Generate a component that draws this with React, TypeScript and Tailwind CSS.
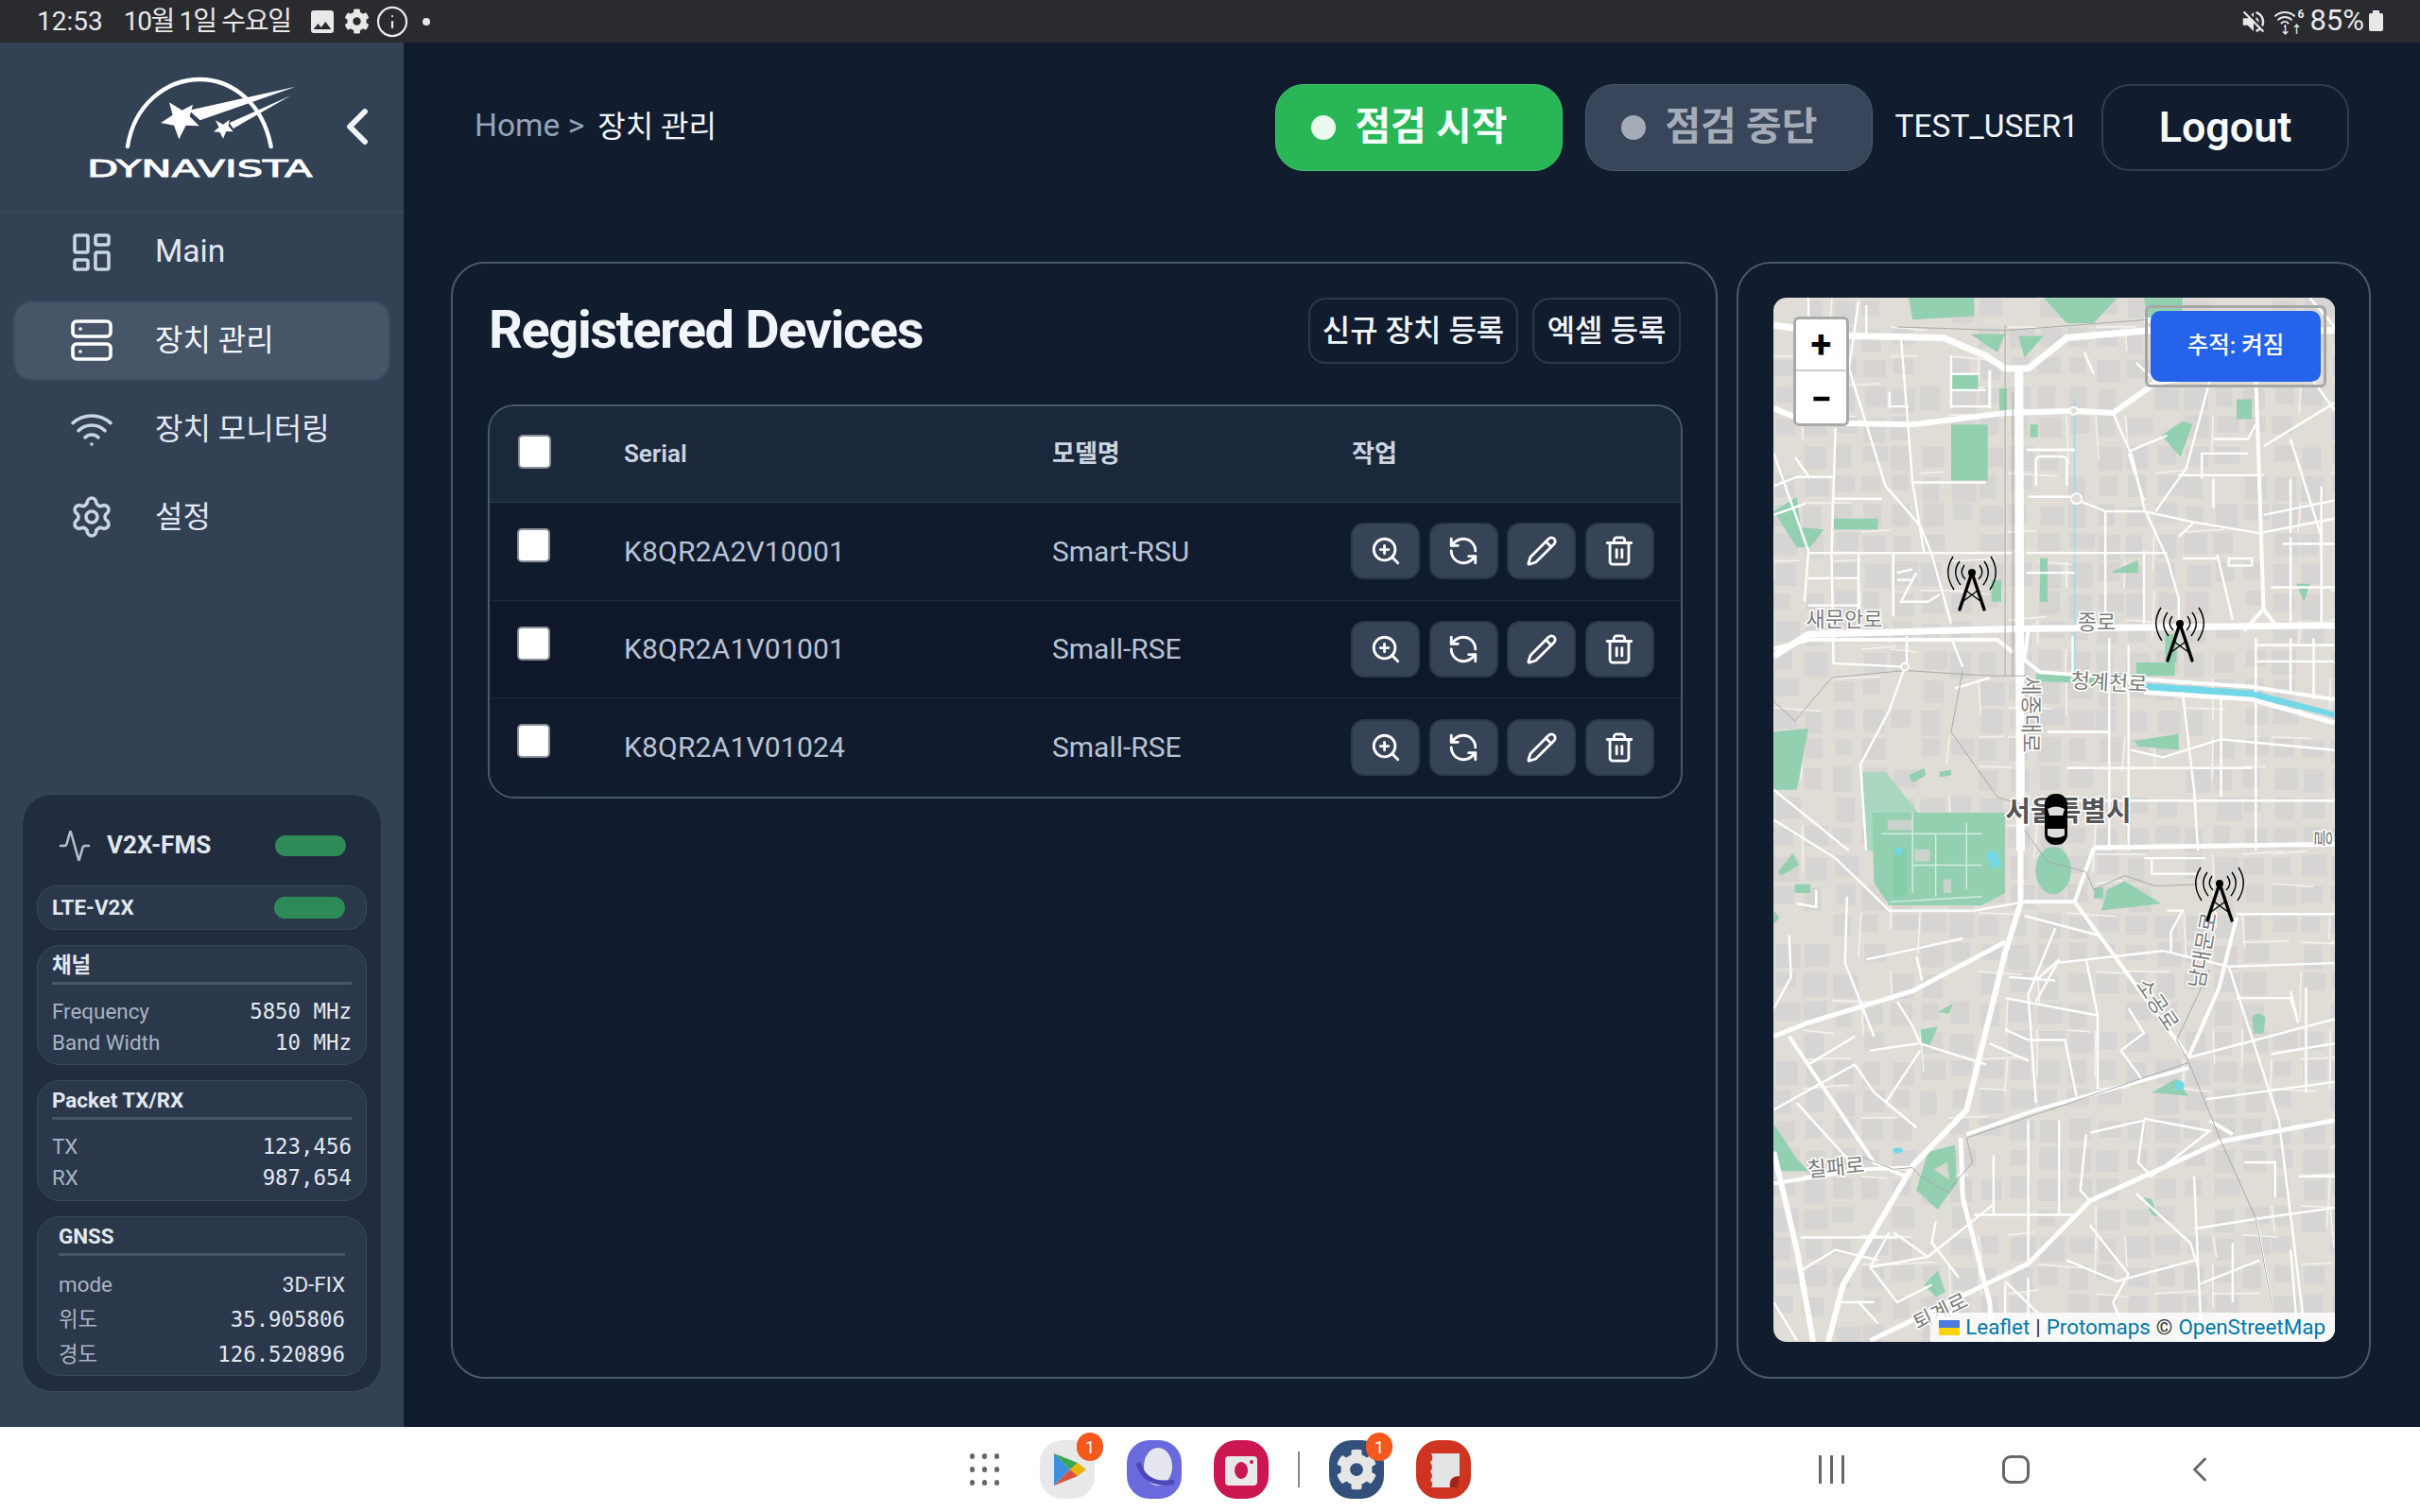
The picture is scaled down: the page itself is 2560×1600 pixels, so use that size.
import {
  Activity,
  ChevronLeft,
  Info,
  LayoutDashboard,
  Pencil,
  RefreshCcw,
  Server,
  Settings,
  Trash2,
  Wifi,
  ZoomIn,
} from "lucide-react"
import { FaCog } from "react-icons/fa"
import { MdImage, MdVolumeOff } from "react-icons/md"

const FONT = "font-['Roboto','Noto_Sans_CJK_KR',sans-serif]"

// map roads, in the coordinates of the two map crops
const topMajor: [number, string][] = [
  [7, "M40 115 L240 145 L480 150 L590 200 L640 235 H700 L800 150 L1010 130 H1494"],
  [9, "M676 235 L680 1568"],
  [6, "M40 345 L130 385 L400 390 L640 358 L820 352 L920 358 L1030 275 L1170 250"],
  [7, "M40 1030 L130 970 L660 955 L1494 945"],
  [4, "M40 1010 L130 985 L620 985 L660 1020"],
  [4, "M700 960 L690 1040 L730 1075 L1280 1115 L1494 1150"],
  [5, "M1000 1130 L1280 1150 L1494 1215"],
  [4, "M1290 250 L1310 900 L1260 960"],
  [4, "M1310 900 L1345 950"],
  [3, "M600 240 L600 345"],
  [6, "M1000 100 L1090 110 L1330 110"],
]
const topMinor = [
  "M200 400 L190 745 L195 1050 L380 1060",
  "M370 150 L400 550 L430 745",
  "M235 235 L330 560 L420 670 L450 750 L500 940",
  "M400 550 H590",
  "M190 595 H320",
  "M130 745 H660",
  "M260 745 V950",
  "M350 745 V920",
  "M40 470 L130 740 L120 880",
  "M40 560 L100 535 H200",
  "M500 980 L530 1060",
  "M385 975 V1060",
  "M700 590 H810 L830 600 L900 630 H1000 L1130 660 L1300 690 L1494 650",
  "M920 358 L970 480 L1000 620 L1060 760 L1090 870 L1090 940",
  "M900 630 V940",
  "M815 975 V1090",
  "M695 745 H1060",
  "M960 465 L1060 420",
  "M1030 630 L1110 510 L1170 270",
  "M1090 530 H1310",
  "M1310 450 L1494 330",
  "M1310 640 L1494 600",
  "M1150 540 V470 L1270 470",
  "M1460 560 V940",
  "M1380 430 L1460 700",
  "M1190 750 L1230 930",
  "M960 1000 V1110",
  "M910 980 V1568",
  "M960 1130 V1568",
  "M1100 1130 L1130 1400 L1140 1568",
  "M1200 1140 V1420",
  "M1290 980 V1130",
  "M1290 1160 V1568",
  "M965 1290 L1050 1310 L1200 1260 L1494 1290",
  "M750 1240 H910",
  "M800 1340 H1280",
  "M790 1430 H1494",
  "M1290 1000 H1494",
  "M1290 1045 H1494",
  "M1380 980 V1130",
  "M1440 980 V1150",
  "M380 1060 L340 1180 L265 1330 L280 1568",
  "M720 560 V490 Q720 478 735 478 H785 Q800 478 800 490 V560",
  "M695 460 H820",
  "M235 1568 L40 1400",
  "M510 1120 L600 1090",
  "M340 300 V340 H390",
  "M500 200 V340 H600",
  "M500 250 H570 M500 295 H590",
  "M95 480 L135 540 M40 640 L120 610",
  "M260 50 L235 235",
  "M130 40 V120 M280 60 V140",
  "M1430 40 L1494 120 M1330 110 L1494 350",
  "M845 190 L870 250 M980 220 L1040 280",
  "M960 470 L1000 600",
  "M1180 430 L1270 430 L1290 390",
  "M1180 620 V540 M1380 540 V690",
  "M1090 700 L1130 660",
  "M1220 760 H1280 V780 H1220 Z",
  "M1380 700 V940 M1360 720 H1494 M1330 840 H1494",
  "M410 800 L370 880 L440 880 L470 860",
  "M400 790 L360 800 M360 820 H400",
  "M130 815 H260 M130 890 H260",
  "M820 460 H700 M820 800 H695",
  "M1000 740 L1000 940 M1100 760 H1190",
]
const topBoundary = [
  "M40 1155 L95 1210 L190 1090 L380 1070 L600 1085 H700",
  "M640 115 V1085",
  "M660 300 V1085",
  "M530 1070 L500 1240 L620 1420 L680 1440",
  "M360 120 L640 130 L1010 100",
]
const bottomMajor: [number, string][] = [
  [6, "M680 0 V260 L640 400 L540 850 L400 1010 L220 1350 L170 1560"],
  [5, "M40 640 L130 600 L400 510 L640 370"],
  [4, "M690 255 H820 L1110 690"],
  [4, "M870 100 L820 255"],
  [5, "M870 100 L1494 90"],
  [4, "M1240 300 L1195 500 L1115 700"],
  [4, "M540 920 L720 850 L1115 730"],
  [5, "M290 1510 L700 1290 L860 1110 L1200 940 L1494 880"],
  [6, "M40 970 L100 1250 L150 1560"],
  [4, "M80 640 L300 1000 L380 1040"],
  [5, "M525 930 L530 1100 L600 1400 L610 1560"],
  [4, "M1170 880 L1230 920"],
  [4, "M40 1060 L270 1020 L400 1015"],
]
const bottomMinor = [
  "M40 20 L200 130 L275 210 L340 280 H560 L690 255",
  "M230 240 L225 430 L300 640",
  "M280 420 L530 360",
  "M410 410 L425 480",
  "M80 350 L85 470 L40 560",
  "M360 540 L400 610 L420 660 L590 720",
  "M290 680 L415 660",
  "M130 720 L250 640",
  "M40 850 L250 720",
  "M100 830 L240 1000",
  "M250 720 L300 800 L410 900",
  "M420 680 L330 830",
  "M770 330 L700 520 L720 830",
  "M690 295 L880 350",
  "M770 430 L1050 395 L1220 440 L1494 430",
  "M640 530 L880 580 L880 790",
  "M700 650 H795 L825 810",
  "M600 660 L700 710",
  "M850 420 L880 580",
  "M1000 880 L985 1000 L1020 1040 L1170 910 L1000 875",
  "M860 915 L1000 880",
  "M850 920 L835 1080 L860 1110",
  "M1115 700 L1290 650 L1494 590",
  "M1160 820 L1494 770",
  "M1220 440 L1350 880",
  "M1350 880 L1420 1510",
  "M1130 1040 L1140 1290 L1150 1510",
  "M1130 1190 L1300 1160 L1494 1130",
  "M1290 1155 L1330 1400",
  "M980 1090 L1120 1230 L1140 1300",
  "M610 980 V1150",
  "M700 880 V1290",
  "M780 880 V1150",
  "M560 1150 H820",
  "M110 1215 H360",
  "M110 1310 L200 1250 L310 1280",
  "M290 1300 L440 1270 L610 1120",
  "M350 1200 L440 1270 L520 1200",
  "M640 1340 L800 1510",
  "M800 1280 L930 1340 L1130 1280",
  "M1380 510 L1400 600",
  "M1420 500 V800",
  "M1240 290 H1494",
  "M1140 1350 L1300 1280",
  "M1060 280 H1100 L1070 340 V400",
  "M40 1400 L100 1510",
  "M940 680 L1000 630 L960 560",
  "M940 680 L1000 770",
  "M100 260 L150 270 V220",
  "M720 480 L780 420 L720 540",
  "M640 620 L700 650 M650 470 L770 480",
  "M1000 130 H1160 M1020 130 V175 H1135",
  "M1240 530 H1380 L1400 600 M1330 690 L1494 660",
  "M1260 1000 H1340 V1100 M1400 1040 H1494",
  "M1230 1230 V1400 M1380 1250 L1400 1510",
  "M860 1180 L960 1320 L920 1400 L960 1510",
  "M700 1330 V1510 M640 1350 V1510",
  "M460 1170 L450 1230 L520 1330 M340 1200 L290 1300 L360 1400 L450 1350",
  "M200 1400 H300 M260 1400 L310 1460",
]
const bottomBoundary =
  "M690 50 L750 140 L850 170 L870 220 L950 180 L1030 210 L1140 205 M1170 450 L1085 650 L1115 710 L1200 940 L1290 1160 L1330 1400 M1115 715 L540 930 L555 1000 L490 1085 L420 1040 L400 1015 L350 1020 L270 985"

// filler blocks and alleys for the map's texture, fixed seed
function makeTexture() {
  const blocks: { x: number; y: number; w: number; h: number }[] = []
  const alleys: string[] = []
  let seed = 17
  const rnd = () => {
    seed = (seed * 16807) % 2147483647
    return seed / 2147483647
  }
  for (let y = 0; y < 1105; y += 31) {
    for (let x = 0; x < 594; x += 31) {
      if (rnd() < 0.12) continue
      blocks.push({ x: x + rnd() * 4, y: y + rnd() * 4, w: 17 + rnd() * 10, h: 16 + rnd() * 11 })
      if (rnd() < 0.3) {
        const len = 24 + rnd() * 30
        alleys.push(
          rnd() < 0.5
            ? `M${x} ${y} l${len} ${rnd() * 8 - 4}`
            : `M${x} ${y} l${rnd() * 8 - 4} ${len}`,
        )
      }
    }
  }
  return { blocks, alleys }
}
const texture = makeTexture()

function Tower({ className }: { className: string }) {
  return (
    <svg viewBox="0 0 52 60" className={`overflow-visible ${className}`} fill="none" stroke="#000">
      <circle cx="26" cy="18" r="4" fill="#000" stroke="none" />
      <path d="M26 18 L13 57 M26 18 L39 57" strokeWidth="3.4" strokeLinecap="round" />
      <path d="M20 37 L35 48 M32 37 L17 48" strokeWidth="1.3" />
      <path d="M6 1 Q-5 18 7 36 M46 1 Q57 18 45 36" strokeWidth="1.4" />
      <path d="M13 6 Q4 18 14 31 M39 6 Q48 18 38 31" strokeWidth="1.4" />
      <path d="M18 10 Q12 18 19 25 M34 10 Q40 18 33 25" strokeWidth="1.4" />
    </svg>
  )
}

function MapArt() {
  return (
    <svg viewBox="0 0 594 1105" className="w-full h-full block">
      <rect width="594" height="1105" fill="#e0ddd6" />
      {texture.blocks.map((b, i) => (
        <rect key={i} x={b.x} y={b.y} width={b.w} height={b.h} fill="#d6d5d3" />
      ))}
      {texture.alleys.map((d, i) => (
        <path key={i} d={d} fill="none" stroke="#f4f3f0" strokeWidth="1.5" />
      ))}
      <g transform="translate(-16 -15) scale(0.408 0.3827)">
        <path d="M390 40 H560 V90 L400 100 Z M740 40 H930 L870 110 H800 Z M1000 40 H1100 V100 H1010 Z" fill="#93d0b0" />
        <path d="M550 140 H640 L620 190 Z M675 145 H740 L690 205 Z" fill="#93d0b0" />
        <path d="M500 250 H570 V295 H500 Z M625 290 H645 V355 H625 Z M1240 320 H1280 V375 H1240 Z" fill="#93d0b0" />
        <path d="M500 390 H595 V545 H500 Z M705 390 H725 V425 H705 Z M1045 420 L1100 380 L1125 390 L1095 480 Z" fill="#93d0b0" />
        <path d="M40 630 L100 590 L110 675 L170 680 L135 730 L100 730 Z M195 650 H310 V680 H195 Z" fill="#93d0b0" />
        <path d="M730 760 H750 V880 H730 Z M920 795 L985 765 V800 H920 Z M1395 830 H1430 L1415 880 Z M605 820 H630 V880 H605 Z" fill="#93d0b0" />
        <path d="M980 1048 H1080 V1085 H980 Z M1055 970 H1085 V1048 H1055 Z M720 1078 H1000 V1110 L720 1100 Z" fill="#93d0b0" />
        <path d="M1000 1105 L1280 1125 L1494 1185 V1200 L1280 1145 L1000 1128 Z" fill="#72d8e8" />
        <path d="M975 1265 L1090 1245 V1290 L985 1280 Z M40 1240 L130 1230 L100 1400 L40 1400 Z" fill="#93d0b0" />
        <path d="M270 1350 H330 L420 1470 H500 L640 1568 H280 Z" fill="#a9d8bf" />
        <path d="M390 1360 L430 1340 L435 1360 L400 1380 Z M470 1350 L500 1345 V1360 L470 1365 Z" fill="#93d0b0" />
        <path d="M820 320 V1090" stroke="#a5dce6" strokeWidth="2" fill="none" vectorEffect="non-scaling-stroke" />
        {topMajor.map(([w, d], i) => (
          <path key={i} d={d} fill="none" stroke="#fff" strokeWidth={w} vectorEffect="non-scaling-stroke" />
        ))}
        {topMinor.map((d, i) => (
          <path key={i} d={d} fill="none" stroke="#fff" strokeWidth="2.4" vectorEffect="non-scaling-stroke" />
        ))}
        {topBoundary.map((d, i) => (
          <path key={i} d={d} fill="none" stroke="#a9a9a9" strokeWidth="1" vectorEffect="non-scaling-stroke" />
        ))}
        <circle cx="825" cy="595" r="14" fill="#e0ddd6" stroke="#fff" strokeWidth="2" vectorEffect="non-scaling-stroke" />
        <circle cx="818" cy="352" r="10" fill="#e0ddd6" stroke="#fff" strokeWidth="2" vectorEffect="non-scaling-stroke" />
        <circle cx="380" cy="1060" r="10" fill="#e0ddd6" stroke="#fff" strokeWidth="2" vectorEffect="non-scaling-stroke" />
      </g>
      <g transform="translate(-16 545) scale(0.408 0.37)">
        <path d="M295 0 H640 V230 L580 265 H340 L300 200 Z" fill="#93d0b0" />
        <path d="M350 100 H385 V240 H350 Z" fill="#84cfa9" />
        <path d="M355 100 H372 V120 H355 Z M590 115 L615 110 L630 150 L605 160 Z" fill="#72d8e8" />
        <path d="M405 105 H445 V140 H405 Z M480 190 H500 V230 H480 Z M335 20 H400 V50 H335 Z" fill="#c9d2cc" />
        <path
          d="M320 60 L580 60 M400 0 V230 M460 60 V240 M540 30 V220 M400 150 H580 M340 255 L580 240"
          fill="none"
          stroke="#d5ecdf"
          strokeWidth="1.4"
          vectorEffect="non-scaling-stroke"
        />
        <ellipse cx="765" cy="165" rx="46" ry="68" fill="#93d0b0" />
        <path d="M890 280 L905 220 L950 195 L1045 260 Z M870 215 H895 V245 H870 Z" fill="#93d0b0" />
        <path d="M40 280 L55 300 L40 320 Z M50 170 L90 115 L105 150 L60 180 Z M95 205 H135 V230 H95 Z" fill="#93d0b0" />
        <path d="M465 570 L505 545 L495 575 Z M420 620 L465 612 L445 665 L425 660 Z" fill="#93d0b0" />
        <path d="M1280 585 Q1295 565 1315 585 L1310 632 H1285 Z M1020 800 L1085 760 L1115 810 Z" fill="#93d0b0" />
        <path d="M40 890 L100 990 L130 1025 H60 L40 1000 Z" fill="#93d0b0" />
        <path d="M440 970 L510 950 L515 1060 L465 1135 L410 1080 Z" fill="#93d0b0" />
        <path d="M455 1020 L490 1000 L495 1050 Z" fill="#d9d8cf" />
        <path d="M430 1350 L465 1310 L485 1370 L460 1385 Z M1000 1100 L1020 1105 L1035 1155 L1020 1150 Z" fill="#93d0b0" />
        <ellipse cx="1092" cy="780" rx="13" ry="14" fill="#72d8e8" />
        <ellipse cx="362" cy="966" rx="13" ry="8" fill="#72d8e8" />
        {bottomMajor.map(([w, d], i) => (
          <path key={i} d={d} fill="none" stroke="#fff" strokeWidth={w} vectorEffect="non-scaling-stroke" />
        ))}
        {bottomMinor.map((d, i) => (
          <path key={i} d={d} fill="none" stroke="#fff" strokeWidth="2.4" vectorEffect="non-scaling-stroke" />
        ))}
        <path d={bottomBoundary} fill="none" stroke="#a9a9a9" strokeWidth="1" vectorEffect="non-scaling-stroke" />
      </g>
      <g
        fontFamily="Roboto, 'Noto Sans CJK KR', sans-serif"
        fill="#7a7a7a"
        stroke="#fff"
        strokeWidth="3"
        paintOrder="stroke"
        textAnchor="middle"
        fontSize="22"
      >
        <text x="75" y="348">새문안로</text>
        <text x="342" y="351">종로</text>
        <text x="355" y="415" transform="rotate(3 355 407)">청계천로</text>
        <text x="0" y="0" transform="translate(265 441) rotate(90)">세종대로</text>
        <text x="312" y="554" fontSize="29" fontWeight="700" fill="#555">서울특별시</text>
        <text x="66" y="928" transform="rotate(-5 66 920)">칠패로</text>
        <text x="0" y="0" transform="translate(400 752) rotate(56)">소공로</text>
        <text x="0" y="0" transform="translate(462 692) rotate(-80)">남대문로</text>
        <text x="0" y="0" transform="translate(180 1080) rotate(-26)">퇴계로</text>
        <text x="0" y="0" fontSize="20" transform="translate(574 572) rotate(90)">을</text>
      </g>
    </svg>
  )
}

const navItems = [
  { label: "Main", Icon: LayoutDashboard, text: "text-[33.6px]" },
  { label: "장치 관리", Icon: Server, active: true, text: "text-[32px]" },
  { label: "장치 모니터링", Icon: Wifi, text: "text-[32px]" },
  { label: "설정", Icon: Settings, text: "text-[32px]" },
]

const devices = [
  { serial: "K8QR2A2V10001", model: "Smart-RSU", bg: "bg-[#111b2e]" },
  { serial: "K8QR2A1V01001", model: "Small-RSE", bg: "bg-[#0f182b]" },
  { serial: "K8QR2A1V01024", model: "Small-RSE", bg: "bg-[#111b2e]" },
]

function Checkbox() {
  return <div className="w-[35px] h-[36px] bg-white rounded-[5px] border-2 border-[#8a8f98]" />
}

function Row({ label, value, tall, plain }: { label: string; value: string; tall?: boolean; plain?: boolean }) {
  return (
    <div className={`flex items-center justify-between -mt-[1px] mb-[1px] ${tall ? "h-[37px]" : "h-[33px]"}`}>
      <span className="text-[22.4px] text-[#a9b4c4]">{label}</span>
      <span
        className={`text-[#e2e8f0] whitespace-pre ${
          plain ? "text-[22.4px]" : "text-[22.4px] font-['DejaVu_Sans_Mono',monospace]"
        }`}
      >
        {value}
      </span>
    </div>
  )
}

function StatBox({ title, className, children }: { title: string; className: string; children: React.ReactNode }) {
  return (
    <div className={`rounded-[24px] border border-[#3b485c] bg-[#2b384b] ${className}`}>
      <div className="h-[30px] flex items-center text-[22.4px] font-bold text-[#e2e8f0]">{title}</div>
      <div className="h-[3px] bg-[#475569] mt-[2px] mb-[13px]" />
      {children}
    </div>
  )
}

function AppIcon({ bg, children, badge }: { bg: string; children: React.ReactNode; badge?: boolean }) {
  return (
    <div className={`relative w-[58px] h-[62px] rounded-[24px] flex items-center justify-center ${bg}`}>
      {children}
      {badge && (
        <span className="absolute -top-[8px] -right-[9px] w-[28px] h-[30px] rounded-full bg-[#f4581c] text-white text-[18px] flex items-center justify-center">
          1
        </span>
      )}
    </div>
  )
}

export default function App() {
  return (
    <div className={`w-[2560px] h-[1600px] flex flex-col overflow-hidden bg-[#111d2f] ${FONT}`}>
      {/* android status bar */}
      <div className="h-[45px] bg-[#2a2b2f] flex items-center text-[#e8e8e8] text-[28px] pl-[39px] pr-[39px] shrink-0">
        <span>12:53</span>
        <span className="ml-[22px] tracking-[-1.3px]">10월 1일 수요일</span>
        <MdImage size={32} className="ml-[17px]" />
        <FaCog size={27} className="ml-[7px]" />
        <Info size={36} strokeWidth={1.5} className="ml-[6px]" />
        <span className="ml-[14px] w-[8px] h-[8px] rounded-full bg-[#e8e8e8]" />
        <MdVolumeOff size={30} className="ml-auto" />
        <div className="relative ml-[6px] w-[32px] h-[30px]">
          <Wifi size={24} strokeWidth={2} className="absolute left-0 top-0" />
          <span className="absolute right-0 -top-[2px] text-[12px] font-bold">6</span>
          <span className="absolute right-[2px] bottom-0 text-[12px] leading-none font-bold">↓↑</span>
        </div>
        <span className="ml-[6px] text-[31px]">85%</span>
        <div className="ml-[5px] relative w-[15px] h-[19px] bg-[#e8e8e8] rounded-[2px] mt-[2px]">
          <span className="absolute -top-[3px] left-[4px] w-[7px] h-[3px] bg-[#e8e8e8]" />
        </div>
      </div>

      <div className="flex-1 flex min-h-0">
        <aside className="w-[427px] bg-[#334155] flex flex-col shrink-0">
          <div className="relative h-[181px] border-b-2 border-[#3c4a5f] pl-[80px] pt-[25px]">
            <svg viewBox="0 0 840 390" className="w-[280px] h-[130px]" fill="#fff">
              <path
                d="M165 255 C185 125 285 42 395 42 C480 42 590 100 620 255"
                fill="none"
                stroke="#fff"
                strokeWidth="13"
                strokeLinecap="round"
              />
              <path d="M297 115 L338 140 L372 122 L362 160 L392 190 L350 188 L328 232 L312 188 L270 180 L308 155 Z" />
              <path d="M360 140 L698 65 L395 172 Z" />
              <path d="M444 172 L468 185 L488 170 L485 190 L500 208 L478 207 L468 230 L458 210 L438 208 L455 194 Z" />
              <path d="M488 180 L682 94 L500 198 Z" />
              <text
                x="36"
                y="350"
                fontFamily="'DejaVu Sans', sans-serif"
                fontSize="72"
                textLength="716"
                lengthAdjust="spacingAndGlyphs"
                stroke="#fff"
                strokeWidth="2.5"
              >
                DYNAVISTA
              </text>
            </svg>
            <ChevronLeft size={64} strokeWidth={2.2} className="absolute left-[346px] top-[57px] text-[#f1f5f9]" />
          </div>

          <nav className="px-[14px] -mt-[2px] flex flex-col gap-[8.5px]">
            {navItems.map(({ label, Icon, active, text }) => (
              <div
                key={label}
                className={`h-[85px] rounded-[20px] border-2 flex items-center pl-[57px] gap-[43px] ${
                  active ? "bg-[#475569] border-[#3c4b63] text-[#f1f5f9]" : "border-transparent text-[#e2e8f0]"
                }`}
              >
                <Icon size={48} strokeWidth={1.8} className={active ? "text-white" : "text-[#cbd5e1]"} />
                <span className={text}>{label}</span>
              </div>
            ))}
          </nav>

          <div className="mt-auto mx-[23px] mb-[37px] rounded-[32px] border border-[#3b485c] bg-[#212c3e] px-[15px] pb-[16px]">
            <div className="h-[96px] flex items-center pl-[22px] pr-[22px] pt-[11px]">
              <Activity size={36} strokeWidth={1.7} className="text-[#b4bdca]" />
              <span className="ml-[16px] text-[26px] font-bold text-[#e2e8f0]">V2X-FMS</span>
              <span className="ml-auto w-[75px] h-[22px] rounded-full bg-[#2e8b57]" />
            </div>
            <div className="h-[47px] rounded-[20px] border border-[#3b485c] bg-[#2b384b] flex items-center pl-[15px] pr-[22px]">
              <span className="text-[22.4px] font-bold text-[#e2e8f0]">LTE-V2X</span>
              <span className="ml-auto w-[75px] h-[23px] rounded-full bg-[#2e8b57]" />
            </div>
            <StatBox title="채널" className="mt-[16px] h-[127px] px-[15px] pt-[6px]">
              <Row label="Frequency" value="5850 MHz" />
              <Row label="Band Width" value="10 MHz" />
            </StatBox>
            <StatBox title="Packet TX/RX" className="mt-[16px] h-[128px] px-[15px] pt-[6px]">
              <Row label="TX" value="123,456" />
              <Row label="RX" value="987,654" />
            </StatBox>
            <StatBox title="GNSS" className="mt-[16px] h-[169px] px-[22px] pt-[6px]">
              <Row label="mode" value="3D-FIX" tall plain />
              <Row label="위도" value="35.905806" tall />
              <Row label="경도" value="126.520896" tall />
            </StatBox>
          </div>
        </aside>

        <main className="flex-1 min-w-0 flex flex-col pl-[50px] pr-[52px] pt-[44px] pb-[51px]">
          <header className="h-[92px] flex items-center pl-[25px] pr-[23px] shrink-0">
            <span className="text-[33.6px] text-[#94a3b8] -mt-[3px]">Home &gt;</span>
            <span className="ml-[14px] text-[32px] text-[#f1f5f9] -mt-[3px]">장치 관리</span>
            <button className="ml-auto w-[304px] h-[92px] rounded-[30px] bg-[#28b656] border border-[#46c36e] flex items-center pl-[37px] text-[41px] font-bold text-[#f4fff7]">
              <span className="w-[26px] h-[26px] rounded-full bg-[#e9f9ee] mr-[20px]" />
              점검 시작
            </button>
            <button className="ml-[24px] w-[304px] h-[92px] rounded-[30px] bg-[#38455b] border border-[#4a576c] flex items-center pl-[37px] text-[41px] font-bold text-[#a5acb8]">
              <span className="w-[26px] h-[26px] rounded-full bg-[#a5acb8] mr-[20px]" />
              점검 중단
            </button>
            <span className="ml-[23px] text-[33.6px] text-[#f1f5f9] -mt-[2px]">TEST_USER1</span>
            <button className="ml-[24px] w-[262px] h-[92px] rounded-[30px] border-2 border-[#303c50] text-[44.8px] font-semibold text-[#f8fafc]">
              Logout
            </button>
          </header>

          <div className="mt-[96px] flex-1 min-h-0 flex gap-[20px]">
            <section className="w-[1340px] rounded-[36px] border-2 border-[#4a586d] px-[38px] pt-[36px]">
              <div className="h-[70px] flex items-center -mr-[1px]">
                <h2 className="text-[56px] font-bold tracking-tight text-[#f1f5f9] -mt-[3px]">Registered Devices</h2>
                <button className="ml-auto w-[222px] h-[70px] rounded-[18px] border-2 border-[#2b384c] text-[32px] font-medium text-[#f1f5f9]">
                  신규 장치 등록
                </button>
                <button className="ml-[15px] w-[157px] h-[70px] rounded-[18px] border-2 border-[#2b384c] text-[32px] font-medium text-[#f1f5f9]">
                  엑셀 등록
                </button>
              </div>

              <div className="mt-[43px] -ml-[1px] -mr-[3px] rounded-[28px] border-2 border-[#4a586d] overflow-hidden">
                <div className="h-[102px] bg-[#1b283b] grid grid-cols-[142px_453px_317px_1fr] items-center border-b border-[#2b384c] text-[26px] font-semibold text-[#cbd5e1]">
                  <div className="pl-[30px] mb-[5px]">
                    <Checkbox />
                  </div>
                  <div>Serial</div>
                  <div>모델명</div>
                  <div>작업</div>
                </div>
                {devices.map((d, i) => (
                  <div
                    key={d.serial}
                    className={`h-[103.5px] grid grid-cols-[142px_453px_316px_1fr] items-center ${d.bg} ${
                      i < 2 ? "border-b border-[#1d293c]" : ""
                    } text-[30px] text-[#b8c3d3]`}
                  >
                    <div className="pl-[29px] self-start pt-[27px]">
                      <Checkbox />
                    </div>
                    <div className="tracking-[0.2px]">{d.serial}</div>
                    <div>{d.model}</div>
                    <div className="flex gap-[9.5px]">
                      {[ZoomIn, RefreshCcw, Pencil, Trash2].map((Icon, j) => (
                        <button
                          key={j}
                          className="w-[73px] h-[60px] rounded-[14px] bg-[#374357] border-2 border-[#2c384b] flex items-center justify-center text-white"
                        >
                          <Icon size={34} strokeWidth={2} />
                        </button>
                      ))}
                    </div>
                  </div>
                ))}
              </div>
            </section>

            <section className="w-[671px] rounded-[36px] border-2 border-[#4a586d] pl-[37px] pr-[36px] pt-[36px] pb-[37px]">
              <div className="relative w-[594px] h-[1105px] rounded-[14px] overflow-hidden">
                <MapArt />
                <div className="absolute left-[21px] top-[20px] w-[59px] h-[116px] rounded-[6px] border-[3px] border-[#a9a9a9] bg-white flex flex-col text-black font-bold">
                  <div className="h-[55px] flex items-center justify-center text-[40px] border-b-2 border-[#ccc]">+</div>
                  <div className="flex-1 flex items-center justify-center text-[40px]">−</div>
                </div>
                <div className="absolute right-[9px] top-[8px] w-[192px] h-[87px] rounded-[6px] border-[3px] border-[#a6a6a6] p-[3px]">
                  <button className="w-full h-full rounded-[10px] bg-[#2563eb] text-white text-[24.5px] font-medium">
                    추적: 켜짐
                  </button>
                </div>
                <Tower className="absolute left-[184px] top-[273px] w-[52px] h-[60px]" />
                <Tower className="absolute left-[404px] top-[327px] w-[52px] h-[60px]" />
                <Tower className="absolute left-[446px] top-[602px] w-[52px] h-[60px]" />
                <svg viewBox="0 0 24 54" className="absolute left-[287px] top-[525px] w-[24px] h-[54px]">
                  <rect width="24" height="54" rx="11" fill="#000" />
                  <path d="M3 16 Q12 11 21 16 L19 23 H5 Z" fill="#dcdcdc" />
                  <path d="M3 37 H21 V44 Q12 49 3 44 Z" fill="#dcdcdc" />
                </svg>
                <div className="absolute right-0 bottom-0 w-[428px] h-[31px] bg-white/80 flex items-center justify-end pr-[10px] text-[22.4px] text-[#333] whitespace-nowrap">
                  <span className="w-[22px] h-[16px] mr-[6px] flex flex-col">
                    <span className="flex-1 bg-[#4c7be1]" />
                    <span className="flex-1 bg-[#ffd500]" />
                  </span>
                  <span className="text-[#0078a8]">Leaflet</span>
                  <span className="mx-[6px]">|</span>
                  <span className="text-[#0078a8]">Protomaps</span>
                  <span className="mx-[6px]">©</span>
                  <span className="text-[#0078a8]">OpenStreetMap</span>
                </div>
              </div>
            </section>
          </div>
        </main>
      </div>

      {/* samsung taskbar */}
      <div className="h-[90px] bg-white shrink-0 flex items-center pl-[1026px]">
        <div className="grid grid-cols-3 gap-x-[8px] gap-y-[8px] w-[31px]">
          {Array.from({ length: 9 }).map((_, i) => (
            <span key={i} className="w-[5px] h-[6px] rounded-full bg-[#666]" />
          ))}
        </div>
        <div className="ml-[43px] flex items-center gap-[34px]">
          <AppIcon bg="bg-[#e8e8e8]" badge>
            <svg viewBox="0 0 58 62" className="w-[58px] h-[62px]">
              <path d="M15 14 V48 L32 31 Z" fill="#3f8fe0" />
              <path d="M15 14 L32 31 L40 24 Z" fill="#34a853" />
              <path d="M40 24 L32 31 L40 38 L49 31 Z" fill="#eab308" />
              <path d="M15 48 L32 31 L40 38 Z" fill="#d9503f" />
            </svg>
          </AppIcon>
          <AppIcon bg="bg-[#6a6ade]">
            <svg viewBox="0 0 58 62" className="w-[58px] h-[62px]">
              <ellipse cx="33" cy="28" rx="15" ry="20" fill="#e6e6ee" />
              <path d="M12 24 Q20 50 50 44" fill="none" stroke="#4c46b8" strokeWidth="5" />
            </svg>
          </AppIcon>
          <AppIcon bg="bg-[#cb1650]">
            <svg viewBox="0 0 58 62" className="w-[58px] h-[62px]">
              <rect x="12" y="17" width="34" height="31" rx="4" fill="#e8e8e8" />
              <ellipse cx="29" cy="32" rx="7" ry="9" fill="#cb1650" />
              <circle cx="40" cy="23" r="2" fill="#cb1650" />
            </svg>
          </AppIcon>
          <span className="-mx-[3px] w-[2px] h-[38px] bg-[#888]" />
          <AppIcon bg="bg-[#33507a]" badge>
            <FaCog size={44} className="text-[#e6e6e6]" />
          </AppIcon>
          <AppIcon bg="bg-[#cf3322]">
            <svg viewBox="0 0 58 62" className="w-[58px] h-[62px]">
              <path d="M16 14 H46 V38 L38 50 H16 Q19 46 15 42 Q19 38 15 33 Q19 28 15 24 Q19 19 16 14 Z" fill="#e4e4e4" />
              <path d="M36 50 Q34 38 46 38 L44 50 Z" fill="#a3241a" />
            </svg>
          </AppIcon>
        </div>
        <div className="ml-[368px] flex w-[27px] justify-between">
          <span className="w-[3px] h-[30px] bg-[#666]" />
          <span className="w-[3px] h-[30px] bg-[#666]" />
          <span className="w-[3px] h-[30px] bg-[#666]" />
        </div>
        <span className="ml-[167px] w-[29px] h-[30px] rounded-[9px] border-[3px] border-[#666]" />
        <ChevronLeft size={44} strokeWidth={1.5} className="ml-[158px] text-[#666]" />
      </div>
    </div>
  )
}
